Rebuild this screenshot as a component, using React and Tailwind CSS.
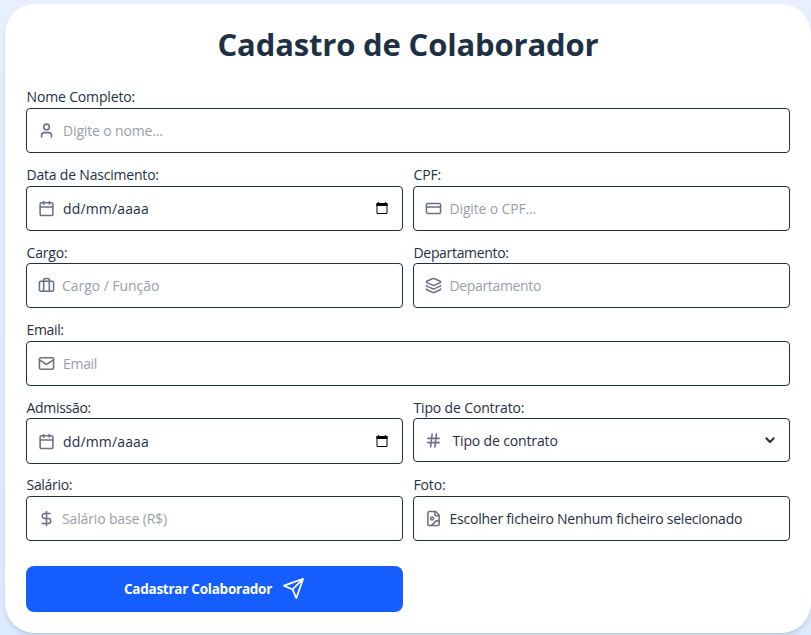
import React from "react";
import { User, Calendar, CreditCard, Briefcase, Layers, Mail, Hash, DollarSign, FileImage } from "lucide-react";

function Field({ label, icon: Icon, text, className = "", boxClass = "h-[45px]", textClass = "tracking-[-0.15px] text-[#999fa8]", labelClass = "leading-[20px] tracking-[-0.15px]", iconClass = "mr-2", children }) {
  return (
    <div className={`flex h-[66px] flex-col ${className}`}>
      <label className={`block h-[21px] shrink-0 whitespace-nowrap pl-[0.5px] text-[14px] ${labelClass}`}>{label}</label>
      <div className={`flex shrink-0 items-center rounded-[4px] border border-[#1e3144] pl-[11px] pr-[13px] ${boxClass}`}>
        <Icon className={`h-[17px] w-[17px] shrink-0 text-[#6a7282] ${iconClass}`} strokeWidth={2.2} />
        <span className={`flex-1 whitespace-nowrap pt-px text-[14px] leading-5 ${textClass}`}>{text}</span>
        {children}
      </div>
    </div>
  );
}

function DatePickerIcon() {
  return (
    <svg className="mr-px h-[13px] w-[12px] shrink-0 text-black" viewBox="0 0 12 13" fill="none">
      <path d="M2.5 0v2M9.5 0v2" stroke="currentColor" strokeWidth="1.2" />
      <path d="M1 1.5h10v10H1z" stroke="currentColor" strokeWidth="1" />
      <path d="M.5 1h11v3H.5z" fill="currentColor" />
    </svg>
  );
}

export default function App() {
  return (
    <div className="h-[635px] w-[811px] overflow-hidden bg-linear-to-b from-[#e6f0fe] to-[#dbeafe] pl-[5px] pt-1 font-['Open_Sans','Noto_Sans',sans-serif] text-[#1e3144]">
      <main className="h-[629px] w-[806px] rounded-[30px] bg-white px-[21px] pt-[19px] shadow-md">
        <h1 className="text-center text-[31px] font-bold leading-[42px] tracking-[-0.16px]">Cadastro de Colaborador</h1>
        <form className="mt-[22px]">
          <div className="grid grid-cols-2 gap-x-2.5 gap-y-[11.6px]">
            <Field className="col-span-2" label="Nome Completo:" icon={User} text="Digite o nome..." />
            <Field label="Data de Nascimento:" icon={Calendar} text="dd/mm/aaaa" labelClass="leading-[20px] tracking-[-0.2px]" textClass="tracking-[0.15px] text-[#1e3144]"><DatePickerIcon /></Field>
            <Field label="CPF:" icon={CreditCard} text="Digite o CPF..." iconClass="mr-[7.5px]" />
            <Field label="Cargo:" icon={Briefcase} text="Cargo / Função" labelClass="leading-[22px] tracking-[-0.15px]" textClass="tracking-[-0.05px] text-[#999fa8]" iconClass="mr-[7px]" />
            <Field label="Departamento:" icon={Layers} text="Departamento" labelClass="leading-[22px] tracking-[-0.32px]" textClass="tracking-[-0.35px] text-[#999fa8]" iconClass="mr-[7.5px]" />
            <Field className="col-span-2" label="Email:" labelClass="leading-[20px] tracking-[-0.35px]" icon={Mail} text="Email" textClass="tracking-[-0.3px] text-[#999fa8]" />
            <Field label="Admissão:" labelClass="leading-[22px] tracking-[-0.3px]" icon={Calendar} text="dd/mm/aaaa" boxClass="h-[45.4px]" textClass="tracking-[0.15px] text-[#1e3144]"><DatePickerIcon /></Field>
            <Field label="Tipo de Contrato:" labelClass="leading-[22px] tracking-[-0.15px]" icon={Hash} text="Tipo de contrato" iconClass="mr-[7.5px]" textClass="pl-[3px] tracking-[-0.15px] text-[#1e3144]" boxClass="h-11">
              <svg className="h-3 w-3 shrink-0" viewBox="0 0 12 12" fill="none"><path d="M1.8 3.8 6 8l4.2-4.2" stroke="currentColor" strokeWidth="2" /></svg>
            </Field>
            <Field label="Salário:" labelClass="leading-[20px] tracking-[-0.3px]" icon={DollarSign} text="Salário base (R$)" iconClass="mr-[7px]" />
            <Field label="Foto:" icon={FileImage} text="Escolher ficheiro Nenhum ficheiro selecionado" iconClass="mr-[7.5px]" textClass="tracking-[-0.23px] text-[#1e3144]" />
          </div>
          <button type="button" className="mt-[25px] flex h-[46px] w-[377px] items-center justify-center gap-2.5 rounded-lg bg-[#155dfc] text-[13.5px] font-bold tracking-[-0.25px] text-white">
            <span>Cadastrar Colaborador</span>
            <svg className="h-[23px] w-[23px]" viewBox="0 0 24 24" fill="none" stroke="currentColor" strokeWidth="1.8" strokeLinecap="round" strokeLinejoin="round"><path d="M22 2 11 13M22 2l-7 20-4-9-9-4z" /></svg>
          </button>
        </form>
      </main>
    </div>
  );
}
